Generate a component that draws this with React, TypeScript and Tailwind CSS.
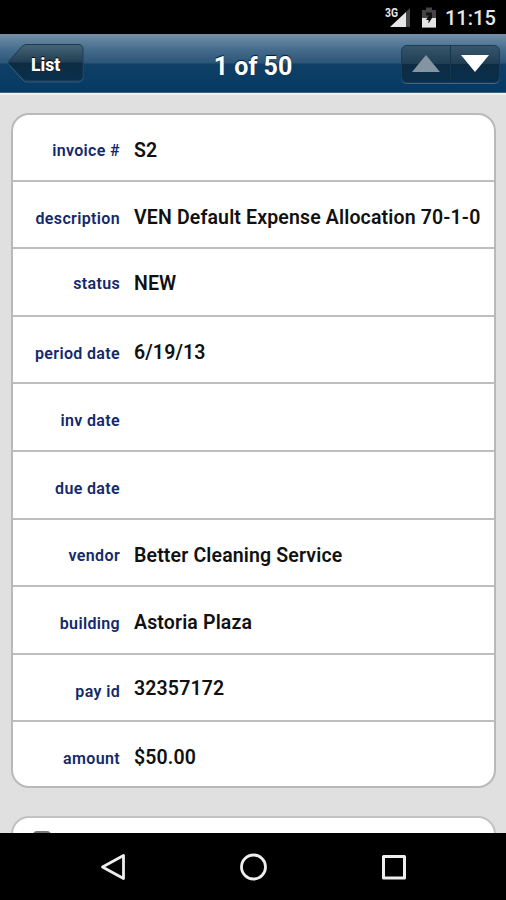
import React from 'react';
import { clsx } from 'clsx';

// ============================================================
// DATA
// ============================================================

interface Field {
  label: string;
  value?: string;
  height: string;
  labelClass?: string;
  valueClass?: string;
}

const fields: Field[] = [
  { label: 'invoice #', value: 'S2', height: 'h-[67px]', labelClass: 'pt-[7px]', valueClass: 'pt-[7px]' },
  { label: 'description', value: 'VEN Default Expense Allocation 70-1-0', height: 'h-[67px]', labelClass: 'pt-[9px]', valueClass: 'pt-[7px]' },
  { label: 'status', value: 'NEW', height: 'h-[68px]', labelClass: 'pt-1', valueClass: 'pt-[3px]' },
  { label: 'period date', value: '6/19/13', height: 'h-[67px]', labelClass: 'pt-[9px]', valueClass: 'pt-[7px]' },
  { label: 'inv date', height: 'h-[68px]', labelClass: 'pt-[7px]' },
  { label: 'due date', height: 'h-[68px]', labelClass: 'pt-[7px]' },
  { label: 'vendor', value: 'Better Cleaning Service', height: 'h-[67px]', labelClass: 'pt-[7px]', valueClass: 'pt-[7px]' },
  { label: 'building', value: 'Astoria Plaza', height: 'h-[68px]', labelClass: 'pt-[7px]', valueClass: 'pt-[5px]' },
  { label: 'pay id', value: '32357172', height: 'h-[67px]', labelClass: 'pt-[9px]', valueClass: 'pt-0.5' },
  { label: 'amount', value: '$50.00', height: 'h-[64px]', labelClass: 'pt-[9px]', valueClass: 'pt-[7px]' },
];

// ============================================================
// STATUS BAR
// ============================================================

const StatusBar: React.FC = () => (
  <div className="flex h-[34px] shrink-0 items-center justify-end bg-black pr-[11px] text-[#e6e6e6]">
    <svg className="h-[34px] w-[62px]" viewBox="0 0 62 34">
      <path d="M27 8v19h-4V12z" fill="#454545" />
      <path d="M7 27 23 12v15z" fill="currentColor" />
      <text x="2" y="16.500" fontSize="12" fontWeight="700" fill="currentColor" stroke="#000" strokeWidth="1.500" paintOrder="stroke" textLength="13" lengthAdjust="spacingAndGlyphs">
        3G
      </text>
      <path d="M39 10h4V7.500h6V10h4v17.500H39z" fill="#454545" />
      <path d="M39 18h14v9.500H39z" fill="currentColor" />
      <path d="M43 12.500h6v5.500l-3.500 5.500V20H43l3-4.500h-3z" fill="#111" />
    </svg>
    <span className="w-[50px] pt-0.5 text-[20px] leading-[34px] font-medium whitespace-nowrap">11:15</span>
  </div>
);

// ============================================================
// HEADER
// ============================================================

const Header: React.FC = () => (
  <header className="grid h-[59px] shrink-0 grid-cols-[1fr_auto_1fr] items-center border-b border-[#42618a] bg-[linear-gradient(#7290aa_0,#476d8d_15px,#2b5576_29px,#103f66_30px,#053a63_100%)]">
    <button className="relative ml-[7px] h-[40px] w-[78px] text-left">
      <svg className="absolute inset-0" width="78" height="40" viewBox="0 0 78 40">
        <defs>
          <linearGradient id="button" x2="0" y2="1">
            <stop offset="0" stopColor="#486578" />
            <stop offset=".49" stopColor="#203e53" />
            <stop offset=".51" stopColor="#0d2c43" />
            <stop offset="1" stopColor="#092f4c" />
          </linearGradient>
        </defs>
        <path d="M20 3h51q5 0 5 5v26q0 5-5 5H20q-3 0-5-3L3 23q-2-2 0-4L15 5q2-2 5-2z" fill="none" stroke="#52738d" strokeOpacity=".6" />
        <path d="M20 1.500h51q5 0 5 5v26q0 5-5 5H20q-3 0-5-3L2 21q-1-1.500 0-3L15 3.500q2-2 5-2z" fill="url(#button)" stroke="#1c3c53" />
      </svg>
      <span className="relative top-0.5 ml-6 text-[17.500px] font-extrabold text-white [text-shadow:0_-1px_1px_#000]">List</span>
    </button>
    <h1 className="pt-[7px] text-[25px] font-bold text-white [text-shadow:0_-1px_1px_#001c38]">1 of 50</h1>
    <div className="mt-px mr-[6px] flex h-[38px] w-[99px] justify-self-end rounded-md border border-[#1c3c53] bg-[linear-gradient(#38566b,#203e53_49%,#0d2c43_51%,#092f4c)] shadow-[0_1px_0_#40657f]">
      <button className="flex flex-1 items-center justify-center border-r border-[#16364b]">
        <svg width="28" height="17" viewBox="0 0 28 17">
          <path d="M14 0 28 17H0z" fill="#8494a0" />
        </svg>
      </button>
      <button className="flex flex-1 items-center justify-center">
        <svg width="28" height="17" viewBox="0 0 28 17">
          <path d="M0 0h28L14 17z" fill="#fff" />
        </svg>
      </button>
    </div>
  </header>
);

// ============================================================
// DETAIL CARD
// ============================================================

const FieldRow: React.FC<{ field: Field; last: boolean }> = ({ field, last }) => (
  <div
    className={clsx(
      'grid grid-cols-[107px_1fr] items-center gap-[14px]',
      field.height,
      !last && 'border-b-2 border-[#bebebe]'
    )}
  >
    <span className={clsx('text-right text-[16px] leading-5 font-semibold tracking-[0.35px] text-[#13296b]', field.labelClass)}>
      {field.label}
    </span>
    <span className={clsx('text-[19.500px] leading-6 font-semibold tracking-[0.15px] whitespace-nowrap text-[#111]', field.valueClass)}>
      {field.value}
    </span>
  </div>
);

const DetailCard: React.FC = () => (
  <section className="rounded-[18px] border-2 border-[#b9b9b9] bg-white">
    {fields.map((field, i) => (
      <FieldRow key={field.label} field={field} last={i === fields.length - 1} />
    ))}
  </section>
);

// ============================================================
// NAVIGATION BAR
// ============================================================

const NavBar: React.FC = () => (
  <nav className="flex h-[67px] shrink-0 items-center justify-center gap-[112px] bg-black pl-px">
    <svg width="28" height="28" viewBox="0 0 28 28" fill="none" stroke="#eee" strokeWidth="2.800" strokeLinejoin="round">
      <path d="M2.500 14 23.500 2.500v23z" />
    </svg>
    <svg width="28" height="28" viewBox="0 0 28 28" fill="none" stroke="#eee" strokeWidth="2.800">
      <circle cx="13.500" cy="14" r="12" />
    </svg>
    <svg width="28" height="28" viewBox="0 0 28 28" fill="none" stroke="#eee" strokeWidth="3" strokeLinejoin="round">
      <path d="M3.500 3.500h21V25h-21z" />
    </svg>
  </nav>
);

export default function App() {
  return (
    <div className="flex h-[900px] w-[506px] flex-col overflow-hidden bg-[#e0e0e0] font-['Roboto',sans-serif]">
      <StatusBar />
      <Header />
      <main className="flex min-h-0 flex-1 flex-col gap-[28px] overflow-hidden border-t-2 border-[#f0f0f0] pt-[18px] pr-[10px] pl-[11px]">
        <DetailCard />
        <section className="h-[60px] shrink-0 rounded-[18px] border-2 border-[#c2c2c2] bg-white pt-[13px] pl-5">
          <div className="h-[18px] w-[18px] rounded-sm border-2 border-[#777]" />
        </section>
      </main>
      <NavBar />
    </div>
  );
}
